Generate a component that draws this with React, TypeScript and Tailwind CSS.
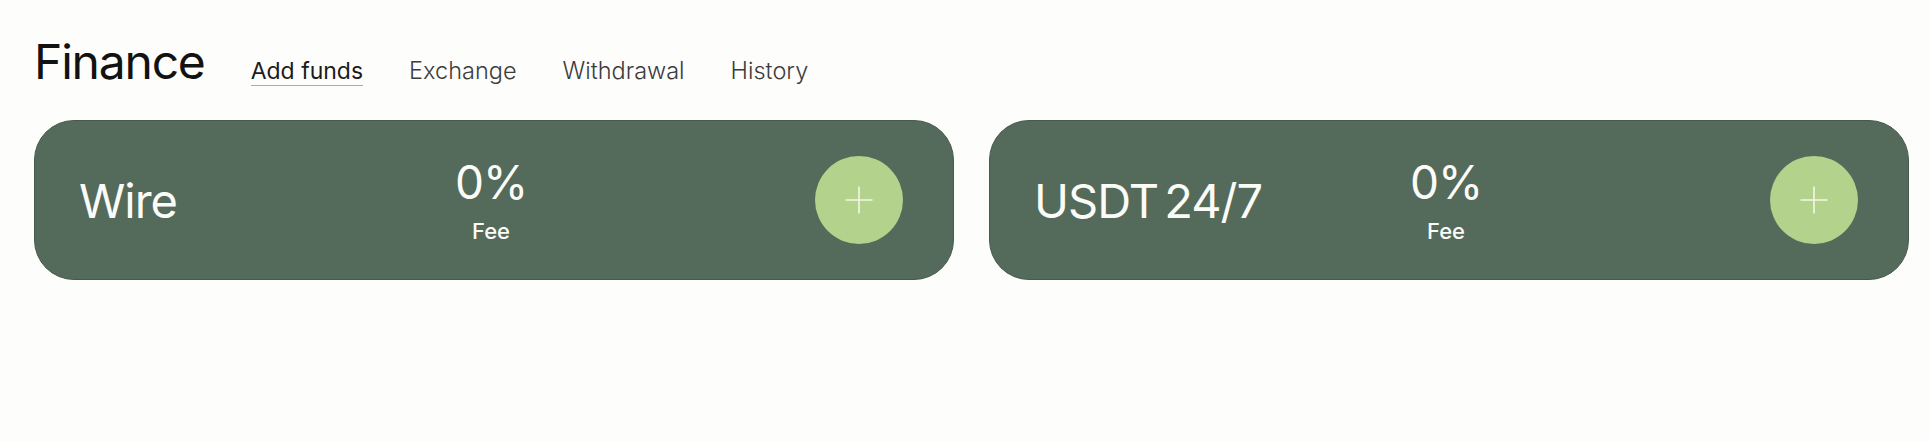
import React from 'react'

// Finance → Add funds: tab strip and the funding method cards.

type Method = {
  name: string
  fee: string
}

const TABS = ['Add funds', 'Exchange', 'Withdrawal', 'History']

const METHODS: Method[] = [
  { name: 'Wire', fee: '0%' },
  { name: 'USDT 24/7', fee: '0%' },
]

function PlusIcon () {
  return (
    <svg width="28" height="28" viewBox="0 0 28 28" fill="none" aria-hidden>
      <path d="M14 0.5V27.5M0.5 14H27.5" stroke="#f3f7e4" strokeWidth="1.6" />
    </svg>
  )
}

function MethodCard ({ m }: { m: Method }) {
  return (
    <div className="grid h-[160px] grid-cols-3 items-center rounded-[40px] border border-[#475a4c] bg-[#546a5b] pl-[44px] pr-[50px] text-[#fbfbf8]">
      <span className="text-[47px] leading-none tracking-[-1px] [word-spacing:-6px] whitespace-nowrap">{m.name}</span>
      <div className="flex flex-col items-center">
        <span className="text-[46px] leading-none tracking-[-1px]">{m.fee}</span>
        <span className="mt-[15px] text-[22px] font-medium leading-[22px]">Fee</span>
      </div>
      <div className="flex justify-end">
        <button
          type="button"
          className="flex h-[88px] w-[88px] items-center justify-center rounded-full bg-[#b3d28b]"
        >
          <PlusIcon />
        </button>
      </div>
    </div>
  )
}

export default function App () {
  return (
    <div
      className="h-[442px] w-full bg-[#fdfdfc] pl-[34px] pr-[20px] pt-[38px]"
      style={{ fontFamily: 'Inter, "Noto Sans", sans-serif' }}
    >
      <header className="flex items-baseline">
        <h1 className="text-[48px] font-normal leading-[48px] tracking-[-1.2px] text-[#121212]">Finance</h1>
        <nav className="ml-[46px] flex items-baseline gap-[46px]">
          {TABS.map((t, i) => (
            <span
              key={t}
              className={
                i === 0
                  ? 'border-b-[1.5px] border-[#aeae98] text-[23px] leading-[28px] text-[#1c1c1c]'
                  : 'text-[23.5px] leading-[28px] text-[#3c3c3c] font-light'
              }
            >
              {t}
            </span>
          ))}
        </nav>
      </header>

      <div className="mt-[34px] grid grid-cols-2 gap-[35px]">
        {METHODS.map(m => <MethodCard key={m.name} m={m} />)}
      </div>
    </div>
  )
}
